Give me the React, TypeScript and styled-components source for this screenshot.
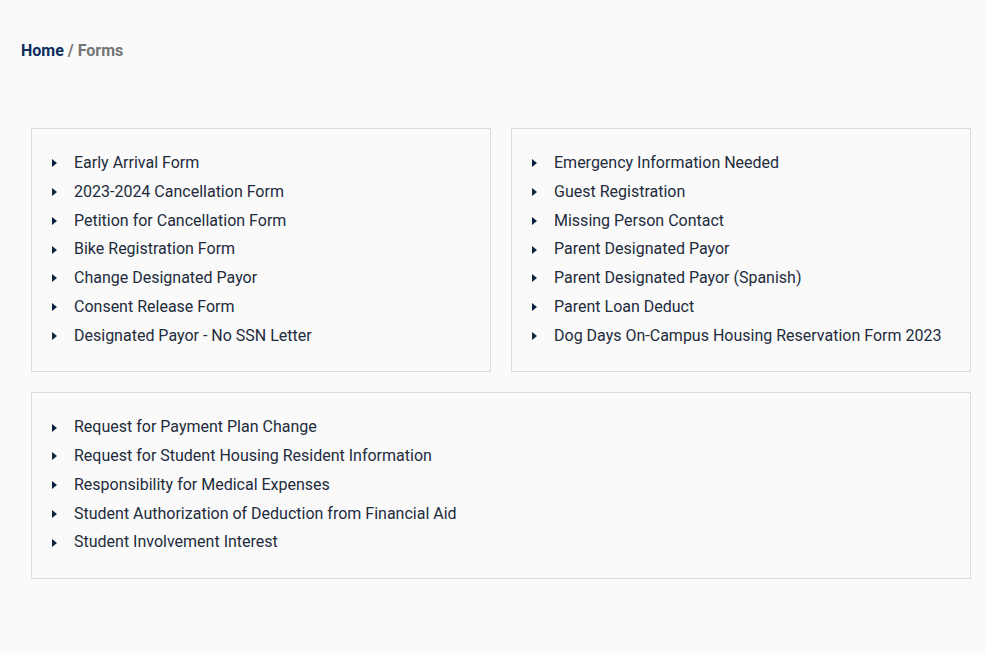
import React from "react";
import styled, { createGlobalStyle } from "styled-components";

const Global = createGlobalStyle`
  html, body { margin: 0; padding: 0; background: #fafafa; }
  body { font-family: Roboto, "Liberation Sans", sans-serif; color: #222b3c; }
`;

const Page = styled.div`
  width: 985px;
  min-height: 655px;
  box-sizing: border-box;
  padding-top: 41px;
`;

const Breadcrumb = styled.nav`
  padding-left: 21px;
  font-size: 16px;
  font-weight: 700;
  line-height: 20px;
  color: #757575;
`;

const Crumb = styled.a`
  color: #0c2d5e;
  text-decoration: none;
`;

const Grid = styled.div`
  margin: 67px 0 0 31px;
  width: 940px;
  display: grid;
  grid-template-columns: 1fr 1fr;
  gap: 20px;
`;

const Card = styled.div<{ $wide?: boolean }>`
  grid-column: ${(p) => (p.$wide ? "1 / span 2" : "auto")};
  border: 1px solid #dcdcdc;
  box-sizing: border-box;
  padding: 20px 20px 21px 20px;
`;

const List = styled.ul`
  list-style: none;
  margin: 0;
  padding: 0;
`;

const Item = styled.li`
  display: flex;
  align-items: center;
  font-size: 16px;
  line-height: 28.75px;
  color: #222b3c;
`;

const Arrow = styled.span`
  width: 0;
  height: 0;
  border-top: 4px solid transparent;
  border-bottom: 4px solid transparent;
  border-left: 5px solid #0c2340;
  margin-right: 17px;
`;

const left = [
  "Early Arrival Form",
  "2023-2024 Cancellation Form",
  "Petition for Cancellation Form",
  "Bike Registration Form",
  "Change Designated Payor",
  "Consent Release Form",
  "Designated Payor - No SSN Letter",
];
const right = [
  "Emergency Information Needed",
  "Guest Registration",
  "Missing Person Contact",
  "Parent Designated Payor",
  "Parent Designated Payor (Spanish)",
  "Parent Loan Deduct",
  "Dog Days On-Campus Housing Reservation Form 2023",
];
const bottom = [
  "Request for Payment Plan Change",
  "Request for Student Housing Resident Information",
  "Responsibility for Medical Expenses",
  "Student Authorization of Deduction from Financial Aid",
  "Student Involvement Interest",
];

const FormList = ({ items }: { items: string[] }) => (
  <List>
    {items.map((t) => (
      <Item key={t}>
        <Arrow />
        {t}
      </Item>
    ))}
  </List>
);

export default function App() {
  return (
    <Page>
      <Global />
      <Breadcrumb>
        <Crumb href="#">Home</Crumb> / Forms
      </Breadcrumb>
      <Grid>
        <Card>
          <FormList items={left} />
        </Card>
        <Card>
          <FormList items={right} />
        </Card>
        <Card $wide>
          <FormList items={bottom} />
        </Card>
      </Grid>
    </Page>
  );
}
